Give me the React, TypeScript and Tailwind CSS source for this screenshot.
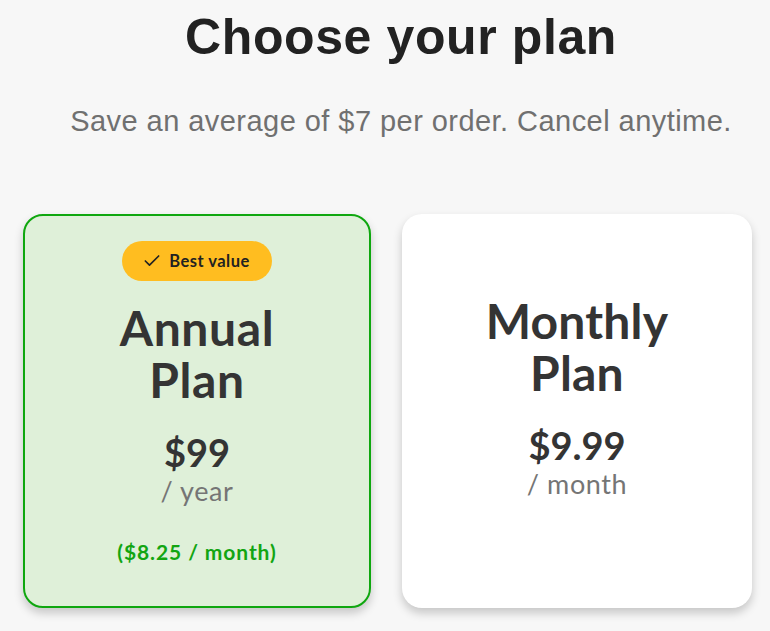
import { Check } from "lucide-react";

const plans = [
  { id: "annual", title: ["Annual", "Plan"], price: "$99", per: "/ year", note: "($8.25 / month)", best: true },
  { id: "monthly", title: ["Monthly", "Plan"], price: "$9.99", per: "/ month", note: "", best: false },
];

function PlanCard({ plan }: { plan: (typeof plans)[number] }) {
  return (
    <div
      className={
        "flex h-[394px] flex-col items-center rounded-[20px] shadow-[0_5px_10px_rgba(0,0,0,0.2)] " +
        (plan.best
          ? "w-[348px] border-2 border-[#0fa70f] bg-[#dff0d9] pt-[25px]"
          : "w-[350px] bg-white pt-[81px]")
      }
    >
      {plan.best && (
        <div className="flex h-[40px] w-[150px] items-center justify-center gap-[7px] rounded-full bg-[#ffbd20] pr-[2px] text-[16.5px] font-bold tracking-[0.5px] text-[#222] font-['Lato',sans-serif]">
          <Check size={20} strokeWidth={2} />
          <span>Best value</span>
        </div>
      )}
      <div
        className={
          "text-center text-[48px] font-bold leading-[52px] text-[#343434] font-['Lato',sans-serif] " +
          (plan.best ? "mt-[21px] tracking-[0.6px]" : "tracking-[0.2px]")
        }
      >
        {plan.title[0]}
        <br />
        {plan.title[1]}
      </div>
      <div className="mt-[27px] text-[38px] font-bold leading-none text-[#343434] font-['Lato',sans-serif]">
        {plan.price}
      </div>
      <div className="mt-[6px] text-[27px] leading-none tracking-[0.6px] text-[#757575] font-['Lato',sans-serif]">
        {plan.per}
      </div>
      {plan.note && (
        <div className="mt-[37px] text-[21px] font-bold leading-none tracking-[0.9px] text-[#12a512] font-['Lato',sans-serif]">
          {plan.note}
        </div>
      )}
    </div>
  );
}

export default function App() {
  return (
    <div className="min-h-screen bg-[#f7f7f7] pt-[12px]">
      <div className="pl-[32px]">
        <h1 className="text-center text-[50px] font-bold leading-none tracking-[0.6px] text-[#222] font-['Liberation_Sans',Arial,sans-serif]">
          Choose your plan
        </h1>
        <p className="mt-[45px] text-center text-[29px] leading-none tracking-[0.45px] text-[#707070] font-['Liberation_Sans',Arial,sans-serif]">
          Save an average of $7 per order. Cancel anytime.
        </p>
      </div>
      <div className="mt-[78px] flex gap-[31px] pl-[23px]">
        {plans.map((p) => (
          <PlanCard key={p.id} plan={p} />
        ))}
      </div>
    </div>
  );
}
